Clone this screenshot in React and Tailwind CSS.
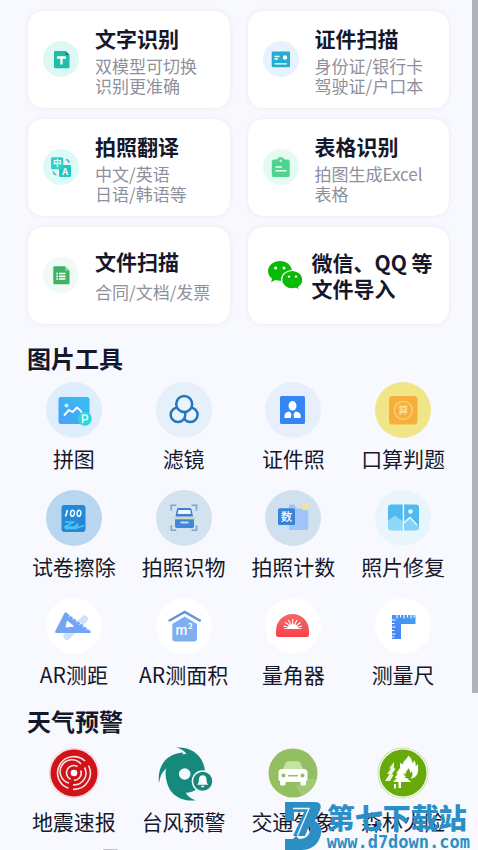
import React from "react";

const svgText = { fontFamily: '"Noto Sans CJK SC", sans-serif' };

/* ---------- card icons (36 x 36) ---------- */

const TextIcon = () => (
  <svg viewBox="0 0 36 36" className="size-9" aria-hidden="true">
    <circle cx="18" cy="18" r="18" fill="#def9f5" />
    <path d="M12 10h10.500l4 4v12.200a1 1 0 0 1-1 1H12a1 1 0 0 1-1-1V11a1 1 0 0 1 1-1z" fill="#22bda6" />
    <path d="M22.500 10l4 4h-3a1 1 0 0 1-1-1z" fill="#12806f" />
    <path d="M14 16.500h9M18.500 16.500v7" stroke="#fff" strokeWidth="2.300" fill="none" />
  </svg>
);

const IdCardIcon = () => (
  <svg viewBox="0 0 36 36" className="size-9" aria-hidden="true">
    <circle cx="18" cy="18" r="18" fill="#e6f3fe" />
    <rect x="8.700" y="10.500" width="18.300" height="15.800" rx="1" fill="#27abcf" />
    <path d="M11.500 15.500h5M11.500 18h3.500M11.500 22.800h12.500" stroke="#fff" strokeWidth="1.300" />
    <circle cx="22" cy="16.500" r="2.200" fill="#fff" />
  </svg>
);

const TranslateIcon = () => (
  <svg viewBox="0 0 36 36" className="size-9" aria-hidden="true">
    <circle cx="18" cy="18" r="18" fill="#dcfbf8" />
    <rect x="16" y="16" width="12" height="12" rx="1.500" fill="#27c4c4" />
    <rect x="8" y="8.300" width="12.300" height="12" rx="1.500" fill="#2fcfc8" />
    <text x="14.200" y="17.400" fontSize="8.500" fontWeight="700" textAnchor="middle" fill="#fff" style={svgText}>中</text>
    <text x="22.200" y="25.600" fontSize="9" fontWeight="700" textAnchor="middle" fill="#fff" style={svgText}>A</text>
    <path d="M23 10.500c2 .2 3 1.400 3.200 3.500M10.200 22.500c.2 2 1.200 3 3.200 3.300" stroke="#5aa6a6" strokeWidth="1.300" fill="none" />
  </svg>
);

const ClipboardIcon = () => (
  <svg viewBox="0 0 36 36" className="size-9" aria-hidden="true">
    <circle cx="18" cy="18" r="18" fill="#e3fbf0" />
    <path d="M11 10.500h2.800l2.400-2.200h3l2.400 2.200h2.900a2.200 2.200 0 0 1 2.200 2.200v13.200a2.200 2.200 0 0 1-2.200 2.200H11a2.200 2.200 0 0 1-2.200-2.200V12.700a2.200 2.200 0 0 1 2.200-2.200z" fill="#4fd391" />
    <circle cx="17.700" cy="11.800" r="1.200" fill="#d8fbe9" />
    <path d="M12.500 18h6.500M12.500 21.800h11" stroke="#e9fff4" strokeWidth="1.500" />
  </svg>
);

const FileIcon = () => (
  <svg viewBox="0 0 36 36" className="size-9" aria-hidden="true">
    <circle cx="18" cy="18" r="18" fill="#effaf5" />
    <path d="M11.300 9.300h10.700l4.500 4.500v12.500a1 1 0 0 1-1 1H11.300a1 1 0 0 1-1-1v-16a1 1 0 0 1 1-1z" fill="#43b064" />
    <path d="M22 9.300l4.500 4.500H23a1 1 0 0 1-1-1z" fill="#8bd39f" />
    <path d="M13.300 16.500h1.700M16 16.500h6.500M13.300 19.300h1.700M16 19.300h6.500M13.300 22h1.700M16 22h6.500" stroke="#fff" strokeWidth="1.700" />
  </svg>
);

const ChatIcon = () => (
  <svg viewBox="0 0 36 36" className="size-9 overflow-visible" aria-hidden="true">
    <path d="M17 4C10.400 4 5 8.400 5 14.200c0 3.200 1.600 5.700 4.200 7.600L8 25.300l4.400-2.200c1.500.4 3 .7 4.600.7 6.600 0 12-4 12-9.600S23.600 4 17 4z" fill="#09bb07" />
    <path d="M29.200 13.500c-5.900 0-10.600 4-10.600 9.200s4.700 9.200 10.600 9.200c1.300 0 2.600-.2 3.800-.5l3.400 1.800-.9-3c2.600-1.700 4.400-4.400 4.400-7.500 0-5.200-4.800-9.200-10.700-9.200z" fill="#09bb07" stroke="#fff" strokeWidth="1.200" />
    <circle cx="12.700" cy="11" r="1.500" fill="#fff" />
    <circle cx="21" cy="11" r="1.500" fill="#fff" />
    <circle cx="26" cy="19.600" r="1.200" fill="#fff" />
    <circle cx="33" cy="19.600" r="1.200" fill="#fff" />
  </svg>
);

/* ---------- tool icons (56 x 56) ---------- */

const Disc = ({ fill, children }) => (
  <svg viewBox="0 0 56 56" className="size-14 overflow-visible" aria-hidden="true">
    <circle cx="28" cy="28" r="28" fill={fill} />
    {children}
  </svg>
);

const CollageIcon = () => (
  <Disc fill="#deeefc">
    <defs>
      <linearGradient id="collage" x1="0" y1="1" x2="1" y2="0">
        <stop offset="0" stopColor="#4a9ff5" />
        <stop offset="1" stopColor="#35c0f3" />
      </linearGradient>
    </defs>
    <rect x="12.500" y="15" width="31" height="27" rx="2.500" fill="url(#collage)" />
    <circle cx="20.500" cy="23.500" r="2" fill="#d5f0ff" />
    <path d="M18 33.500l5-5.500 3.500 2 4.500-4.500 3.500 3 2 3.500" stroke="#fff" strokeWidth="1.900" fill="none" strokeLinejoin="round" />
    <circle cx="38.800" cy="36.800" r="7" fill="#2ed5dd" />
    <path d="M36.700 41v-8h2.500a2.400 2.400 0 0 1 0 4.800h-2.500" stroke="#d9ffff" strokeWidth="1.600" fill="none" />
  </Disc>
);

const FilterIcon = () => (
  <Disc fill="#e6f0fb">
    <g stroke="#2874bf" strokeWidth="2.500" fill="#eaf4fe">
      <circle cx="34.300" cy="32.700" r="7.300" />
      <circle cx="22" cy="32.700" r="7.300" />
      <circle cx="28.200" cy="22" r="8" />
    </g>
  </Disc>
);

const PortraitIcon = () => (
  <Disc fill="#e6effb">
    <rect x="15" y="14" width="25" height="28" rx="1.500" fill="#3585f3" />
    <ellipse cx="27.500" cy="23.800" rx="4" ry="4.800" fill="#fff" />
    <path d="M19.500 36v-2.500c0-2.300 2-3.500 5-4l3 4 3-4c3 .5 5.200 1.700 5.200 4V36z" fill="#fff" />
    <path d="M26.700 30.500h1.600l.8 5.500h-3.200z" fill="#3585f3" />
  </Disc>
);

const ArithmeticIcon = () => (
  <Disc fill="#f0e688">
    <rect x="14" y="14" width="28.500" height="28.500" rx="3.500" fill="#f8ae3d" />
    <circle cx="28.300" cy="28.300" r="9" fill="none" stroke="#fbd277" strokeWidth="1.300" />
    <text x="28.300" y="32.200" fontSize="10.500" fontWeight="500" textAnchor="middle" fill="#fde0a0" style={svgText}>算</text>
  </Disc>
);

const EraseIcon = () => (
  <Disc fill="#b9d6f0">
    <rect x="15.500" y="15" width="24" height="27" rx="3" fill="#2488d8" />
    <path d="M21.500 20l-2 6.500" stroke="#fff" strokeWidth="1.600" />
    <g fill="none" stroke="#fff" strokeWidth="1.400">
      <ellipse cx="26.500" cy="23.300" rx="1.900" ry="3" transform="rotate(10 26.500 23.300)" />
      <ellipse cx="33" cy="23.300" rx="1.900" ry="3" transform="rotate(10 33 23.300)" />
    </g>
    <path d="M19 32h9l-5 2.500-4.500 2.500h10l3-3-1 4 7.500-2.500M19 38.500h11" stroke="#4cc3f4" strokeWidth="1.700" fill="none" strokeLinejoin="round" />
  </Disc>
);

const ScanObjectIcon = () => (
  <Disc fill="#d2e2ef">
    <path d="M15.300 20.500v-5.200h5M35.500 15.300h5v5.200M15.300 35.300v5h5M35.500 40.300h5v-5" stroke="#7ba6d6" strokeWidth="1.600" fill="none" />
    <path d="M22.500 18h11.500a1.500 1.500 0 0 1 1.500 1.200l1.500 7.300H19.500l1.500-7.300a1.500 1.500 0 0 1 1.500-1.200z" fill="#3f7fd0" />
    <path d="M22.300 20h12l.7 4h-13.400z" fill="#f2f8fd" />
    <path d="M17.500 27.700h21.500" stroke="#d9e25c" strokeWidth="1.400" />
    <path d="M19 29.300h19v7a1.700 1.700 0 0 1-1.700 1.700H20.700a1.700 1.700 0 0 1-1.700-1.700z" fill="#3f86dc" />
    <path d="M24.500 32.500h8" stroke="#c9e4fb" strokeWidth="1.800" />
  </Disc>
);

const CountIcon = () => (
  <Disc fill="#d1e0ef">
    <path d="M24 14.500h5l3 4h11.300V38a2 2 0 0 1-2 2H24z" fill="#9fc4f8" />
    <rect x="37" y="13.500" width="6.500" height="6.500" rx=".8" fill="#f1e3a0" />
    <rect x="13" y="18.300" width="17" height="16.700" rx="1.500" fill="#3983d6" />
    <text x="21.500" y="31" fontSize="11.500" fontWeight="500" textAnchor="middle" fill="#fff" style={svgText}>数</text>
  </Disc>
);

const RepairIcon = () => (
  <Disc fill="#e9f5fd">
    <rect x="13" y="14.500" width="31" height="25.800" rx="3" fill="#50b9f0" />
    <path d="M13 30.500l7-5 8 6v8.800H16a3 3 0 0 1-3-3z" fill="#8ed8f8" />
    <path d="M29 31l5.500-4.500 9.500 9.500v1.300a3 3 0 0 1-3 3H29z" fill="#84d1f7" />
    <path d="M29 33l6-5.500 7 7.500" stroke="#e6f7ff" strokeWidth="1.500" fill="none" />
    <circle cx="35.500" cy="21.500" r="2.200" fill="#fff" />
    <path d="M28.400 14v27" stroke="#f2faff" strokeWidth="1.400" />
  </Disc>
);

const DistanceIcon = () => (
  <Disc fill="#ffffff">
    <path d="M38.500 21L21 38.500" stroke="#cfe2fc" strokeWidth="7" strokeLinecap="round" />
    <path d="M18.500 15a1.300 1.300 0 0 1 2-.3l23.800 18.200c1 .9.500 2.100-.7 2.100H10.500c-1.200 0-1.800-1-1.200-2z" fill="#72a6f3" />
    <path d="M21 22.500l7.500 6-9 1z" fill="#fff" />
    <path d="M23 18.800l1.500-2M26.500 21.500l1.500-2M30 24.200l1.500-2M33.500 26.900l1.500-2M37 29.500l1.500-2M40.500 32l1.500-2" stroke="#fff" strokeWidth="1" />
  </Disc>
);

const AreaIcon = () => (
  <Disc fill="#ffffff">
    <path d="M12.700 23l16-9 16 9" stroke="#6294d6" strokeWidth="2.400" fill="none" />
    <path d="M28.700 18.500L41 26v14.500a3 3 0 0 1-3 3H19.300a3 3 0 0 1-3-3V26z" fill="#7eaff2" />
    <text x="28" y="37" fontSize="13" fontWeight="500" textAnchor="middle" fill="#fff" style={svgText}>m²</text>
  </Disc>
);

const ProtractorIcon = () => (
  <Disc fill="#ffffff">
    <defs>
      <linearGradient id="protractor" x1="0" y1="0" x2="0" y2="1">
        <stop offset="0" stopColor="#f06a6a" />
        <stop offset="1" stopColor="#fb4249" />
      </linearGradient>
    </defs>
    <path d="M11 32.500a16.500 16.500 0 0 1 33 0V37a2 2 0 0 1-2 2H13a2 2 0 0 1-2-2z" fill="url(#protractor)" />
    <path d="M19 30.500h17.500M22.500 30.500a5.300 5 0 0 1 10.500 0z" stroke="#fff" strokeWidth=".8" fill="#fff" />
    <path d="M24 27l-4-2.500M25.500 26l-2-4M27.700 26v-5M30 26l2-4M32 27l3.500-2.500M22.500 29l-4-1M33 29l4-1" stroke="#fff" strokeWidth="1.100" />
  </Disc>
);

const RulerIcon = () => (
  <Disc fill="#ffffff">
    <defs>
      <linearGradient id="ruler" x1="1" y1="0" x2="0" y2="1">
        <stop offset="0" stopColor="#3fa5f2" />
        <stop offset="1" stopColor="#4a7df2" />
      </linearGradient>
    </defs>
    <path d="M17 17h23.500v9H26v15h-9z" fill="url(#ruler)" />
    <path d="M22 17v3.500M25.500 17v2.500M29 17v3.500M32.500 17v2.500M36 17v3.500M39 17v2.500M17 22h3.500M17 25.500h2.500M17 29h3.500M17 32.500h2.500M17 36h3.500M17 39h2.500" stroke="#fff" strokeWidth="1.100" />
  </Disc>
);

/* ---------- weather icons (56 x 56) ---------- */

const QuakeIcon = () => (
  <svg viewBox="0 0 56 56" className="size-14" aria-hidden="true">
    <circle cx="28" cy="28" r="25.500" fill="#f3dfe0" />
    <circle cx="28" cy="28" r="23.500" fill="#d0121b" />
    <g fill="none" stroke="#f9e4dc" strokeWidth="1.600">
      <path d="M39 16a16.300 16.300 0 1 0-16.500 27.300" />
      <path d="M42.500 20.500A16.300 16.300 0 0 1 27 44.300" />
      <path d="M35 19a11.800 11.800 0 1 0-12 19" />
      <path d="M38.500 22.500A11.800 11.800 0 0 1 27 39.800" />
      <path d="M31.500 21.500a7.300 7.300 0 1 0-7 12.800" />
      <path d="M34.800 25.500a7.300 7.300 0 0 1-6.800 9.800" />
    </g>
    <circle cx="28" cy="28" r="3.300" fill="#fff" />
  </svg>
);

const TyphoonIcon = () => (
  <svg viewBox="0 0 56 56" className="size-14 overflow-visible" aria-hidden="true">
    <g fill="#158a7c">
      <circle cx="29" cy="28.500" r="19.500" />
      <path d="M20 2.500C36 1.500 48 11 49 27L32 22 31 10C29 6 25 3.500 20 2.500z" />
      <path d="M3 38.500C1 22 9 9 27 7.500L20 26 10.500 23C6 27 3.500 32 3 38.500z" />
      <path d="M40 55.300C24 57 11 49 10 31L28 36 29 46C31 51 35 54 40 55.300z" />
    </g>
    <circle cx="28.700" cy="29" r="5.800" fill="#f4faff" />
    <circle cx="46.700" cy="36.300" r="11" fill="#f8f9fe" />
    <circle cx="46.700" cy="36.300" r="9.500" fill="#158a7c" />
    <path d="M46.700 30.300c-2.500 0-3.800 1.800-3.800 4.200 0 3-.6 4-1.700 5.200h11c-1.100-1.200-1.700-2.200-1.700-5.200 0-2.400-1.300-4.200-3.800-4.200zM45 40.700h3.400a1.700 1.700 0 0 1-3.400 0z" fill="#fff" />
  </svg>
);

const TrafficIcon = () => (
  <svg viewBox="0 0 56 56" className="size-14" aria-hidden="true">
    <circle cx="28" cy="28" r="24.500" fill="#91bf62" />
    <path d="M31 42l9-8 11.700 0a24.500 24.500 0 0 1-15 16.700z" fill="#a0ca74" />
    <path d="M17.500 25l3-7a3 3 0 0 1 2.800-1.800h9.400a3 3 0 0 1 2.800 1.800l3 7z" fill="#c5e3a3" />
    <path d="M17 24h22a3.500 3.500 0 0 1 3.500 3.500V34a2.500 2.500 0 0 1-1.500 2.300V39a1.500 1.500 0 0 1-1.500 1.500H37a1.500 1.500 0 0 1-1.500-1.500v-2h-15v2a1.500 1.500 0 0 1-1.500 1.500h-2.500A1.500 1.500 0 0 1 15 39v-2.700A2.500 2.500 0 0 1 13.500 34v-6.500A3.500 3.500 0 0 1 17 24z" fill="#fff" />
    <circle cx="18.500" cy="30.500" r="2" fill="#91bf62" />
    <circle cx="37.500" cy="30.500" r="2" fill="#91bf62" />
    <path d="M23 30.700h10" stroke="#91bf62" strokeWidth="1.500" />
  </svg>
);

const ForestFireIcon = () => (
  <svg viewBox="0 0 56 56" className="size-14" aria-hidden="true">
    <circle cx="28" cy="28" r="25.500" fill="#b9d79a" />
    <circle cx="28" cy="28" r="24.800" fill="#f7fbef" />
    <circle cx="28" cy="28" r="23.500" fill="#68aa0c" />
    <path d="M19 17l-5 6.500h2l-4 5.500h2.500L10 36h5l3.500-6-1.500-1 3.500-5-1.500-1z" fill="#e8f5d8" />
    <path d="M25 23l-4 5.500h2l-3.500 4.500H22l-4 4h5.500V43h2.500v-6h10L32 33h-3l2-1-3-3.500h1.500z" fill="#fff" />
    <path d="M20 39v4.500" stroke="#fff" strokeWidth="1.800" />
    <path d="M33 10.500c3.500 2.500 4.500 5 4.200 8 1.300-.7 1.800-2 1.800-3.500 1.500 2 2 4 1.500 6 1-.3 1.800-1 2.300-2 .8 6 .5 10-2.300 12.500-1.500 1.500-3.500 2-5 2 2-2 2.500-4 1.500-7l-1.800 1.500c0-2-.5-3.500-2-5-.5 2.500-2.700 3.500-2.700 6.500-5-3-6.500-7-5-12 .8 1 1.500 1.500 2.500 1.800-.3-4 5-5 5-8.800z" fill="#fff" />
  </svg>
);

/* ---------- data ---------- */

const cards = [
  { title: "文字识别", lines: ["双模型可切换", "识别更准确"], Icon: TextIcon },
  { title: "证件扫描", lines: ["身份证/银行卡", "驾驶证/户口本"], Icon: IdCardIcon },
  { title: "拍照翻译", lines: ["中文/英语", "日语/韩语等"], Icon: TranslateIcon },
  { title: "表格识别", lines: ["拍图生成Excel", "表格"], Icon: ClipboardIcon },
  { title: "文件扫描", lines: ["合同/文档/发票"], Icon: FileIcon },
];

const imageTools = [
  ["拼图", CollageIcon],
  ["滤镜", FilterIcon],
  ["证件照", PortraitIcon],
  ["口算判题", ArithmeticIcon],
  ["试卷擦除", EraseIcon],
  ["拍照识物", ScanObjectIcon],
  ["拍照计数", CountIcon],
  ["照片修复", RepairIcon],
  ["AR测距", DistanceIcon],
  ["AR测面积", AreaIcon],
  ["量角器", ProtractorIcon],
  ["测量尺", RulerIcon],
];

const weatherTools = [
  ["地震速报", QuakeIcon],
  ["台风预警", TyphoonIcon],
  ["交通气象", TrafficIcon],
  ["森林火险", ForestFireIcon],
];

/* ---------- pieces ---------- */

const cardClass =
  "flex h-[99px] items-center rounded-2xl border border-[#f1f2f8] bg-white pb-[2px] pl-[15px] text-left shadow-[0_0_4px_rgba(40,50,90,0.05)]";

function FeatureCard({ title, lines, Icon }) {
  const spacing = lines.length > 1 ? "gap-[5px] pt-1" : "gap-2";
  return (
    <button type="button" className={`${cardClass} gap-4`}>
      <span className="shrink-0"><Icon /></span>
      <span className={`flex flex-col ${spacing}`}>
        <span className="text-[21px] leading-[26px] font-bold whitespace-nowrap">{title}</span>
        <span className="flex flex-col text-[17px] leading-5 whitespace-nowrap text-[#8e909c]">
          {lines.map((line) => (
            <span key={line}>{line}</span>
          ))}
        </span>
      </span>
    </button>
  );
}

function ToolGrid({ tools }) {
  return (
    <div className="-mx-2 grid grid-cols-4 gap-y-[18px]">
      {tools.map(([label, Icon]) => (
        <button key={label} type="button" className="flex flex-col items-center gap-[6px]">
          <Icon />
          <span className="text-[21px] leading-7 whitespace-nowrap">{label}</span>
        </button>
      ))}
    </div>
  );
}

const Heading = ({ children }) => (
  <h2 className="text-2xl leading-8 font-bold">{children}</h2>
);

function Watermark() {
  return (
    <div className="absolute right-2 bottom-0 flex items-end gap-1 text-[#2b8fc6]">
      <svg viewBox="0 0 38 48" className="h-12 w-[38px]" aria-hidden="true">
        <path
          d="M0 0h30c5 0 7 3 5 8l-5 11c5 3 7 7 6 13-2 10-9 16-20 16H0V37h8l3-3 3 3c6 0 10-3 11-8 .5-2 0-3.500-1-5l-4 10H8L19 10H9v9H0z"
          fill="#2b8fc6"
        />
        <path d="M8 6.500h16L12.500 33.500" stroke="#e8f6ff" strokeWidth="1.400" fill="none" />
      </svg>
      <div className="flex flex-col">
        <span className="text-[28px] leading-[34px] font-black whitespace-nowrap">第七下载站</span>
        <span className="font-['DejaVu_Sans_Mono',monospace] text-[17px] leading-4 font-bold">www.d7down.com</span>
      </div>
    </div>
  );
}

export default function App() {
  return (
    <div className="relative flex h-screen overflow-hidden bg-[#f8f9fe] font-['Noto_Sans_CJK_SC',sans-serif] text-[#15172b]">
      <main className="min-w-0 flex-1 pt-[10px] pr-[22px] pl-[27px]">
        <section className="grid grid-cols-2 gap-x-4 gap-y-[9px]">
          {cards.map((card) => (
            <FeatureCard key={card.title} {...card} />
          ))}
          <button type="button" className={`${cardClass} gap-[13px]`}>
            <span className="shrink-0"><ChatIcon /></span>
            <span className="text-[21px] leading-[26px] font-bold whitespace-nowrap">
              微信、QQ 等<br />文件导入
            </span>
          </button>
        </section>

        <section className="mt-[17px] flex flex-col gap-2">
          <Heading>图片工具</Heading>
          <ToolGrid tools={imageTools} />
        </section>

        <section className="mt-[17px] flex flex-col gap-2">
          <Heading>天气预警</Heading>
          <ToolGrid tools={weatherTools} />
        </section>

        <section className="mt-2">
          <Heading>PDF工具</Heading>
        </section>
      </main>
      <div className="h-[693px] w-[6px] shrink-0 bg-[#b1b3b8]" />
      <Watermark />
    </div>
  );
}
